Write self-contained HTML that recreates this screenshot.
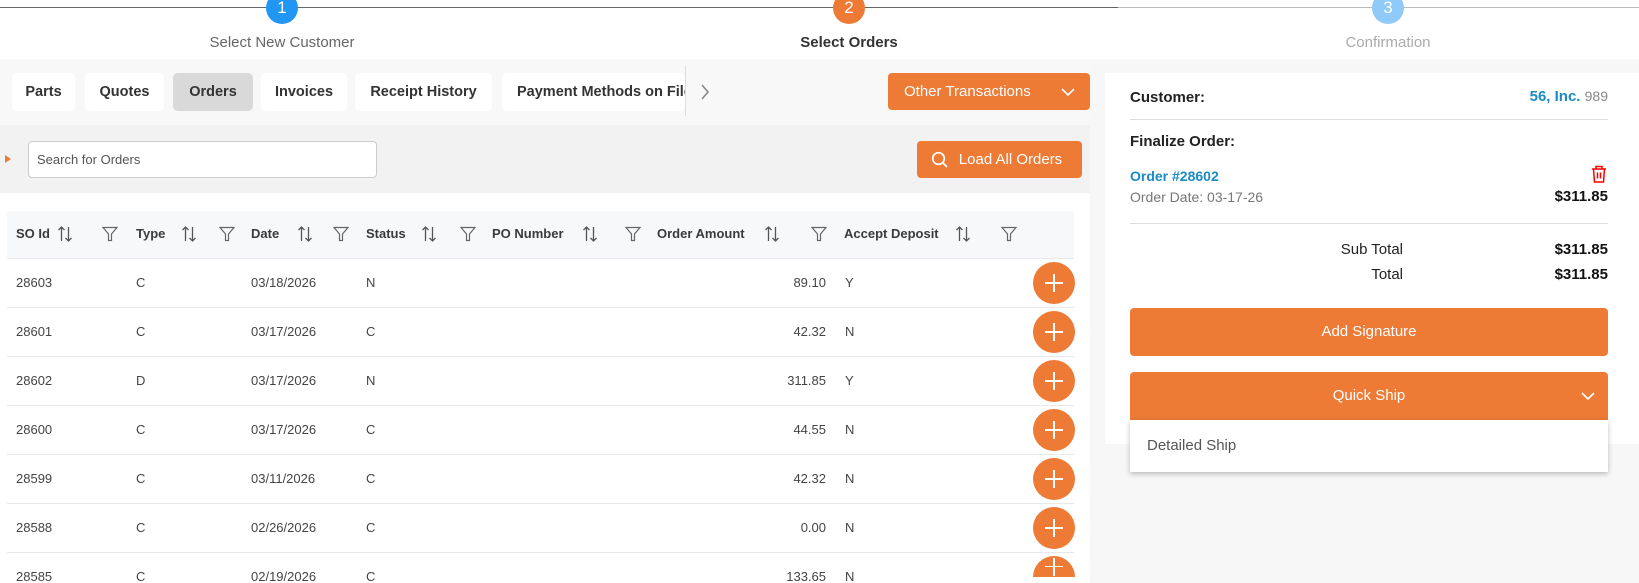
<!DOCTYPE html>
<html><head><meta charset="utf-8"><style>
*{margin:0;padding:0;box-sizing:border-box}
html,body{width:1639px;height:583px;overflow:hidden}
body{background:#f7f7f7;font-family:"Liberation Sans",sans-serif;color:#333;position:relative;font-size:14px}
.a{position:absolute}
.top{left:0;top:0;width:1639px;height:59px;background:#fff}
.line{top:7px;height:1px;background:#666}
.circ{width:32px;height:32px;border-radius:50%;color:#fff;text-align:center;line-height:32px;font-size:17px;top:-8px}
.lbl{top:34px;font-size:15px;transform:translateX(-50%);white-space:nowrap}
.tab{top:73px;height:38px;background:#fff;border-radius:5px;font-size:14.5px;font-weight:bold;color:#333;text-align:center;line-height:38px;white-space:nowrap;overflow:hidden}
.btn{background:#ed7a35;color:#fff;border-radius:4px;text-align:center;font-size:15px}
.h{top:226px;font-size:13px;font-weight:bold;color:#3a3a3a}
.c{font-size:13px;color:#444}
.plus{width:42px;height:42px;border-radius:50%;background:#ed7a35}
.plus:before,.plus:after{content:"";position:absolute;background:#fff;left:50%;top:50%}
.plus:before{width:18px;height:1.6px;margin:-0.8px 0 0 -9px}
.plus:after{width:1.6px;height:18px;margin:-9px 0 0 -0.8px}
.rl{height:1px;background:#e6e8ec;left:7px;width:1067px}
.clip{left:0;top:0;width:1639px;height:583px;overflow:hidden}
</style></head><body>
<div class="a clip">
<div class="a top"></div>
<div class="a line" style="left:0;width:1118px"></div>
<div class="a line" style="left:1118px;width:521px;background:#bbb"></div>
<div class="a circ" style="left:266px;background:#2196f3">1</div>
<div class="a circ" style="left:833px;background:#ed7a35">2</div>
<div class="a circ" style="left:1372px;background:#90caf9">3</div>
<div class="a lbl" style="left:282px;color:#666">Select New Customer</div>
<div class="a lbl" style="left:849px;color:#333;font-weight:bold">Select Orders</div>
<div class="a lbl" style="left:1388px;color:#aaa">Confirmation</div>

<div class="a" style="left:0;top:59px;width:1090px;height:66px;background:#f8f8f8"></div>
<div class="a tab" style="left:12px;width:63px">Parts</div>
<div class="a tab" style="left:85px;width:79px">Quotes</div>
<div class="a tab" style="left:173px;width:80px;background:#d9d9d9">Orders</div>
<div class="a tab" style="left:261px;width:86px">Invoices</div>
<div class="a tab" style="left:355px;width:137px">Receipt History</div>
<div class="a tab" style="left:502px;width:183px;text-align:left;padding-left:15px">Payment Methods on File</div>
<div class="a" style="left:685px;top:66px;width:1px;height:50px;background:#ddd"></div>
<svg class="a" style="left:698px;top:83px" width="14" height="18"><path d="M4 2l6 7-6 7" fill="none" stroke="#888" stroke-width="1.6"/></svg>
<div class="a btn" style="left:888px;top:73px;width:202px;height:37px;line-height:37px;text-align:left;padding-left:16px">Other Transactions</div>
<svg class="a" style="left:1060px;top:86px" width="16" height="12"><path d="M2 3l6 6 6-6" fill="none" stroke="#fff" stroke-width="1.6"/></svg>

<div class="a" style="left:0;top:125px;width:1090px;height:68px;background:#f2f2f2"></div>
<div class="a" style="left:5px;top:155px;width:0;height:0;border-left:6px solid #ed7a35;border-top:4px solid transparent;border-bottom:4px solid transparent"></div>
<div class="a" style="left:28px;top:141px;width:349px;height:37px;background:#fff;border:1px solid #ccc;border-radius:4px;font-size:13px;color:#555;line-height:35px;padding-left:8px">Search for Orders</div>
<div class="a btn" style="left:917px;top:141px;width:165px;height:37px;line-height:37px;padding-left:22px">Load All Orders</div>
<svg class="a" style="left:931px;top:151px" width="18" height="18"><circle cx="7.5" cy="7.5" r="5.8" fill="none" stroke="#fff" stroke-width="1.7"/><path d="M11.8 11.8L16 16" stroke="#fff" stroke-width="1.8"/></svg>

<div class="a" style="left:0;top:193px;width:1090px;height:390px;background:#fff"></div>
<div class="a" style="left:7px;top:211px;width:1067px;height:47px;background:#f7f8fa"></div>
<div class="a rl" style="top:258px"></div>
<div id="hdr"></div>
<div id="rows"></div>

<div class="a" style="left:1105px;top:73px;width:534px;height:371px;background:#fff"></div>
<div class="a" style="left:1130px;top:89px;font-size:15px;font-weight:bold;color:#222">Customer:</div>
<div class="a" style="left:1400px;width:208px;top:88px;text-align:right;font-size:15px"><b style="color:#1a8ac6">56, Inc.</b> <span style="color:#888;font-size:14px">989</span></div>
<div class="a" style="left:1130px;top:119px;width:478px;height:1px;background:#ddd"></div>
<div class="a" style="left:1130px;top:133px;font-size:15px;font-weight:bold;color:#222">Finalize Order:</div>
<div class="a" style="left:1130px;top:168px;font-size:14px;font-weight:bold;color:#1a8ac6">Order #28602</div>
<svg class="a" style="left:1591px;top:165px" width="16" height="18"><path d="M1 4h14M5 4V1.5h6V4M2.5 4l1 13h9l1-13M6.5 7.5v6M9.5 7.5v6" fill="none" stroke="#f00" stroke-width="1.5"/></svg>
<div class="a" style="left:1130px;top:189px;font-size:14px;color:#777">Order Date: 03-17-26</div>
<div class="a" style="left:1450px;width:158px;top:188px;text-align:right;font-size:15px;font-weight:bold;color:#111">$311.85</div>
<div class="a" style="left:1130px;top:223px;width:478px;height:1px;background:#ddd"></div>
<div class="a" style="left:1250px;width:153px;top:241px;text-align:right;font-size:15px;color:#222">Sub Total</div>
<div class="a" style="left:1450px;width:158px;top:241px;text-align:right;font-size:15px;font-weight:bold;color:#111">$311.85</div>
<div class="a" style="left:1250px;width:153px;top:266px;text-align:right;font-size:15px;color:#222">Total</div>
<div class="a" style="left:1450px;width:158px;top:266px;text-align:right;font-size:15px;font-weight:bold;color:#111">$311.85</div>
<div class="a btn" style="left:1130px;top:308px;width:478px;height:48px;line-height:48px">Add Signature</div>
<div class="a btn" style="left:1130px;top:372px;width:478px;height:48px;line-height:48px;border-radius:4px 4px 0 0">Quick Ship</div>
<svg class="a" style="left:1580px;top:390px" width="16" height="12"><path d="M2 3l6 6 6-6" fill="none" stroke="#fff" stroke-width="1.6"/></svg>
<div class="a" style="left:1130px;top:420px;width:478px;height:52px;background:#fff;box-shadow:0 2px 5px rgba(0,0,0,.25);font-size:15px;color:#555;line-height:52px;padding-left:17px">Detailed Ship</div>
</div>
<script>
var H=[["SO Id",16,57,102],["Type",136,181,219],["Date",251,297,333],["Status",366,421,460],["PO Number",492,582,625],["Order Amount",657,764,811],["Accept Deposit",844,955,1001]];
var s="";
var sort='<svg width="16" height="18"><path d="M4.5 16V2M1.5 5l3-3 3 3M11.5 2v14M8.5 13l3 3 3-3" fill="none" stroke="#555" stroke-width="1.3"/></svg>';
var fil='<svg width="16" height="16"><path d="M1 1.5h14l-5.5 6.5v6.5h-3V8z" fill="none" stroke="#666" stroke-width="1.2"/></svg>';
H.forEach(function(h){s+='<div class="a h" style="left:'+h[1]+'px">'+h[0]+'</div><div class="a" style="left:'+h[2]+'px;top:225px">'+sort+'</div><div class="a" style="left:'+h[3]+'px;top:226px">'+fil+'</div>';});
document.getElementById("hdr").innerHTML=s;
var R=[["28603","C","03/18/2026","N","89.10","Y"],["28601","C","03/17/2026","C","42.32","N"],["28602","D","03/17/2026","N","311.85","Y"],["28600","C","03/17/2026","C","44.55","N"],["28599","C","03/11/2026","C","42.32","N"],["28588","C","02/26/2026","C","0.00","N"],["28585","C","02/19/2026","C","133.65","N"]];
s="";
R.forEach(function(r,i){var y=258+i*49;var ty=y+17;
s+='<div class="a c" style="left:16px;top:'+ty+'px">'+r[0]+'</div><div class="a c" style="left:136px;top:'+ty+'px">'+r[1]+'</div><div class="a c" style="left:251px;top:'+ty+'px">'+r[2]+'</div><div class="a c" style="left:366px;top:'+ty+'px">'+r[3]+'</div><div class="a c" style="left:726px;width:100px;text-align:right;top:'+ty+'px">'+r[4]+'</div><div class="a c" style="left:845px;top:'+ty+'px">'+r[5]+'</div><div class="a plus" style="left:1033px;top:'+(y+4)+'px;'+(i==6?'height:21px;border-radius:21px 21px 0 0;overflow:hidden':'')+'"></div>';
if(i<6)s+='<div class="a rl" style="top:'+(y+49)+'px"></div>';});
document.getElementById("hdr").insertAdjacentHTML("afterend","");
document.getElementById("rows").innerHTML=s;
</script>
</body></html>
